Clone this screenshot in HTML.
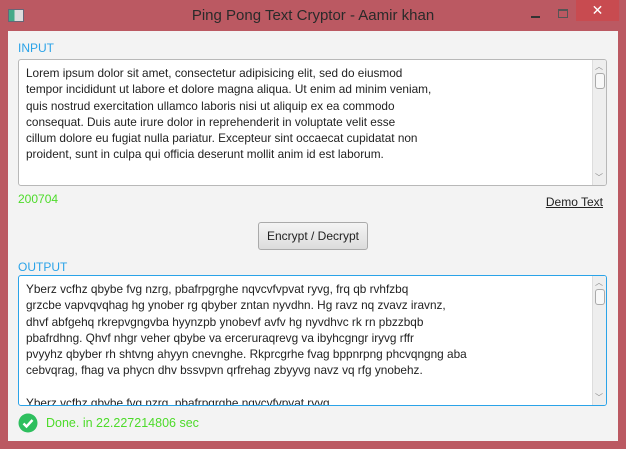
<!DOCTYPE html><html><head><style>
body{margin:0;width:626px;height:449px;background:#bb5962;font-family:"Liberation Sans",sans-serif;position:relative;overflow:hidden}
.title{position:absolute;top:7px;left:0;width:626px;text-align:center;font-size:15px;color:#2a2a2a}
.ico{position:absolute;left:8px;top:9px;width:14px;height:11px;border:1px solid #667;background:linear-gradient(90deg,#4a8 0 40%,#ddd 40%)}
.close{position:absolute;left:576px;top:0;width:43px;height:21px;background:#c84b50;color:#fff;text-align:center;font-size:14px;line-height:21px}
.min{position:absolute;left:531px;top:16px;width:9px;height:2px;background:#333}
.max{position:absolute;left:558px;top:9px;width:8px;height:6px;border:1px solid #555;border-top-width:2px}
.client{position:absolute;left:8px;top:31px;width:610px;height:410px;background:#f3f3f3}
.lbl{position:absolute;font-size:12px;color:#2aa3e8}
.box{position:absolute;left:10px;width:587px;background:#fff;border:1px solid #b8b8b8;border-radius:3px;overflow:hidden}
.box .t{padding:5px 0 0 7px;font-size:11.8px;line-height:16.3px;color:#222;white-space:pre}
.sb{position:absolute;right:0;top:0;bottom:0;width:13px;background:#eee;border-left:1px solid #ddd}
.th{position:absolute;left:2px;top:13px;width:8px;height:14px;border:1px solid #aaa;border-radius:3px;background:#f8f8f8}
.ar{position:absolute;left:2px;font-size:8px;color:#888}
.btn{position:absolute;left:250px;top:191px;width:108px;height:26px;border:1px solid #aaa;border-radius:3px;background:linear-gradient(#f4f4f4,#dcdcdc);font-size:12px;text-align:center;line-height:26px;color:#222;white-space:nowrap}
</style></head><body>
<div class="ico"></div>
<div class="title">Ping Pong Text Cryptor - Aamir khan</div>
<div class="min"></div>
<div class="max"></div>
<div class="close">✕</div>
<div class="client">
<div class="lbl" style="left:10px;top:10px">INPUT</div>
<div class="box" style="top:28px;height:125px"><div class="t">Lorem ipsum dolor sit amet, consectetur adipisicing elit, sed do eiusmod
tempor incididunt ut labore et dolore magna aliqua. Ut enim ad minim veniam,
quis nostrud exercitation ullamco laboris nisi ut aliquip ex ea commodo
consequat. Duis aute irure dolor in reprehenderit in voluptate velit esse
cillum dolore eu fugiat nulla pariatur. Excepteur sint occaecat cupidatat non
proident, sunt in culpa qui officia deserunt mollit anim id est laborum.</div>
<div class="sb"><div class="ar" style="top:1px">︿</div><div class="th"></div><div class="ar" style="bottom:2px">﹀</div></div></div>
<div class="lbl" style="left:10px;top:161px;color:#4ddb2a">200704</div>
<div style="position:absolute;right:15px;top:164px;font-size:12px;color:#222;text-decoration:underline">Demo Text</div>
<div class="btn">Encrypt / Decrypt</div>
<div class="lbl" style="left:10px;top:229px">OUTPUT</div>
<div class="box" style="top:244px;height:129px;border-color:#2aa3e8"><div class="t">Yberz vcfhz qbybe fvg nzrg, pbafrpgrghe nqvcvfvpvat ryvg, frq qb rvhfzbq
grzcbe vapvqvqhag hg ynober rg qbyber zntan nyvdhn. Hg ravz nq zvavz iravnz,
dhvf abfgehq rkrepvgngvba hyynzpb ynobevf avfv hg nyvdhvc rk rn pbzzbqb
pbafrdhng. Qhvf nhgr veher qbybe va erceruraqrevg va ibyhcgngr iryvg rffr
pvyyhz qbyber rh shtvng ahyyn cnevnghe. Rkprcgrhe fvag bppnrpng phcvqngng aba
cebvqrag, fhag va phycn dhv bssvpvn qrfrehag zbyyvg navz vq rfg ynobehz.

Yberz vcfhz qbybe fvg nzrg, pbafrpgrghe nqvcvfvpvat ryvg</div>
<div class="sb"><div class="ar" style="top:1px">︿</div><div class="th"></div><div class="ar" style="bottom:2px">﹀</div></div></div>
<svg style="position:absolute;left:10px;top:382px" width="20" height="20"><circle cx="10" cy="10" r="9.5" fill="#2ebf5e"/><path d="M5.5 10.5l3 3 6-6.5" stroke="#fff" stroke-width="2.4" fill="none"/></svg>
<div style="position:absolute;left:38px;top:385px;font-size:12.5px;color:#4ddb2a">Done. in 22.227214806 sec</div>
</div>
</body></html>
